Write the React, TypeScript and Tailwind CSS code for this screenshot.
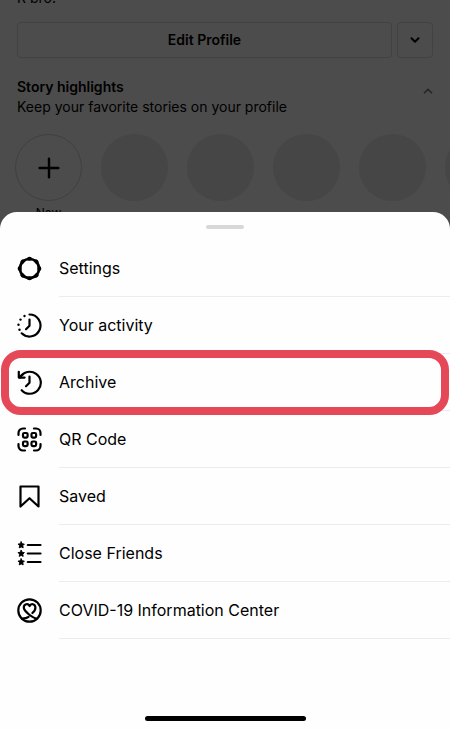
import type { ReactNode } from 'react'
import { ChevronDown, ChevronUp, Plus } from 'lucide-react'

type MenuItem = {
  label: string
  icon: ReactNode
  highlighted?: boolean
}

const menuItems: MenuItem[] = [
  { label: 'Settings', icon: <SettingsIcon /> },
  { label: 'Your activity', icon: <ActivityIcon /> },
  { label: 'Archive', icon: <ArchiveIcon />, highlighted: true },
  { label: 'QR Code', icon: <QrIcon /> },
  { label: 'Saved', icon: <SavedIcon /> },
  { label: 'Close Friends', icon: <CloseFriendsIcon /> },
  { label: 'COVID-19 Information Center', icon: <CovidIcon /> },
]

export default function App() {
  return (
    <div className="flex min-h-screen flex-col overflow-hidden bg-[#4c4c4c] font-['Inter','Liberation_Sans',sans-serif] text-black">
      <ProfileHeader />
      <MenuSheet />
    </div>
  )
}

function ProfileHeader() {
  return (
    <header>
      <p className="-mt-3 px-[17px] text-sm leading-5">R bro!</p>

      {/* Profile actions */}
      <div className="mt-[14px] flex gap-[5px] px-[17px]">
        <button
          type="button"
          className="h-9 flex-1 rounded-[4px] border border-[#424242] text-sm font-semibold"
        >
          Edit Profile
        </button>
        <button
          type="button"
          aria-label="More options"
          className="flex size-9 items-center justify-center rounded-[4px] border border-[#424242]"
        >
          <ChevronDown className="size-[14px]" strokeWidth={3.4} />
        </button>
      </div>

      {/* Highlights */}
      <div className="mt-[19px] flex items-start justify-between px-[17px]">
        <div className="text-sm leading-5">
          <h2 className="font-semibold">Story highlights</h2>
          <p>Keep your favorite stories on your profile</p>
        </div>
        <button type="button" aria-label="Collapse highlights" className="mt-[7px] text-[#262626]">
          <ChevronUp className="-mr-[2px] size-[14px]" strokeWidth={3} />
        </button>
      </div>
      <div className="mt-[17px] flex gap-[19px] overflow-hidden pl-[15px]">
        <div className="flex shrink-0 flex-col items-center">
          <button
            type="button"
            aria-label="New highlight"
            className="flex size-[67px] items-center justify-center rounded-full border border-[#404040]"
          >
            <Plus className="size-8" strokeWidth={1.8} />
          </button>
          <span className="mt-[2px] text-xs leading-5">New</span>
        </div>
        {[1, 2, 3, 4, 5].map((n) => (
          <div key={n} className="size-[67px] shrink-0 rounded-full bg-[#464646]" />
        ))}
      </div>
    </header>
  )
}

function MenuSheet() {
  return (
    <main className="relative -mt-[11px] flex flex-1 flex-col rounded-t-[17px] bg-[#fefefe]">
      <div className="mx-auto mt-[13px] h-1 w-[38px] rounded-full bg-[#d8d8d8]" />
      <ul className="mt-[11px]">
        {menuItems.map((item) => (
          <li key={item.label} className="relative">
            <button type="button" className="flex h-[57px] w-full items-center gap-[17px] pl-[17px] text-left">
              <span className="size-[25px] shrink-0">{item.icon}</span>
              <span className="flex h-full flex-1 items-center border-b border-[#ececec] text-base">
                {item.label}
              </span>
            </button>
            {item.highlighted && (
              <div className="pointer-events-none absolute -inset-y-1 right-px left-px rounded-[20px] border-8 border-[#e54958]" />
            )}
          </li>
        ))}
      </ul>
      {/* Home indicator */}
      <div className="mx-auto mt-auto mb-[9px] h-[5px] w-[161px] rounded-full bg-black" />
    </main>
  )
}

function Icon({ children }: { children: ReactNode }) {
  return (
    <svg
      viewBox="0 0 25 25"
      fill="none"
      stroke="currentColor"
      strokeWidth="2.2"
      strokeLinecap="round"
      strokeLinejoin="round"
      className="size-full"
      aria-hidden="true"
    >
      {children}
    </svg>
  )
}

function SettingsIcon() {
  return (
    <Icon>
      <circle cx="12.5" cy="12.5" r="9.5" strokeWidth="2.6" />
      <g fill="currentColor" stroke="none">
        {[0, 45, 90, 135, 180, 225, 270, 315].map((angle) => (
          <ellipse
            key={angle}
            cx="12.5"
            cy="2.7"
            rx="2.5"
            ry="2"
            transform={`rotate(${angle} 12.5 12.5)`}
          />
        ))}
      </g>
    </Icon>
  )
}

function ActivityIcon() {
  return (
    <Icon>
      <path d="M12.5 1.5a11 11 0 1 1-7.8 18.8" />
      <path d="M12.5 6.5v6.2L9 16.2" />
      <g fill="currentColor" stroke="none">
        <circle cx="7.5" cy="3" r="1.2" />
        <circle cx="3.5" cy="6.6" r="1.2" />
        <circle cx="1.5" cy="11.8" r="1.2" />
        <circle cx="2.5" cy="16.8" r="1.2" />
      </g>
    </Icon>
  )
}

function ArchiveIcon() {
  return (
    <Icon>
      <path d="M3.2 7.4A11 11 0 1 1 4.7 20.2" />
      <path d="M1.8 1.8v5.8h5.8" />
      <path d="M2.3 7.1l3.6-2.8" />
      <path d="M12.5 6.5v6.2L9 16.2" />
    </Icon>
  )
}

function QrIcon() {
  return (
    <Icon>
      <path d="M1.5 8V6A4.5 4.5 0 0 1 6 1.5h2M17 1.5h2A4.5 4.5 0 0 1 23.5 6v2M23.5 17v2a4.5 4.5 0 0 1-4.5 4.5h-2M8 23.5H6A4.5 4.5 0 0 1 1.5 19v-2" />
      <rect x="6" y="6" width="4.6" height="4.6" rx="1.3" />
      <rect x="14.5" y="6" width="4.6" height="4.6" rx="1.3" />
      <rect x="6" y="14.5" width="4.6" height="4.6" rx="1.3" />
      <rect x="14.5" y="14.5" width="4.6" height="4.6" rx="1.3" />
    </Icon>
  )
}

function SavedIcon() {
  return (
    <Icon>
      <path d="M3.5 2.5h18v20l-9-8.3-9 8.3z" />
    </Icon>
  )
}

function CloseFriendsIcon() {
  return (
    <Icon>
      {[4, 12.5, 21].map((y) => (
        <g key={y}>
          <path d={`M10.8 ${y}h12.7`} />
          <path
            d="M0-3.2 1-1.2 3.2-.9 1.6.7 2 2.9 0 1.9-2 2.9-1.6.7-3.2-.9-1-1.2z"
            transform={`translate(4.2 ${y})`}
            fill="currentColor"
            strokeWidth="0.9"
          />
        </g>
      ))}
    </Icon>
  )
}

function CovidIcon() {
  return (
    <Icon>
      <circle cx="12.5" cy="12.5" r="11.2" />
      <path d="M15.4 15C17.5 13 18.7 11.5 18.4 9.3C18.1 5.8 14 5 12.6 8C11 5 7 6 6.8 9.3C6.6 12 9 14 12 16.5C14.5 18.5 17 20.3 20 20.5" />
      <path d="M5 20.7C8 20.5 10 20 11.6 18.8" />
    </Icon>
  )
}
